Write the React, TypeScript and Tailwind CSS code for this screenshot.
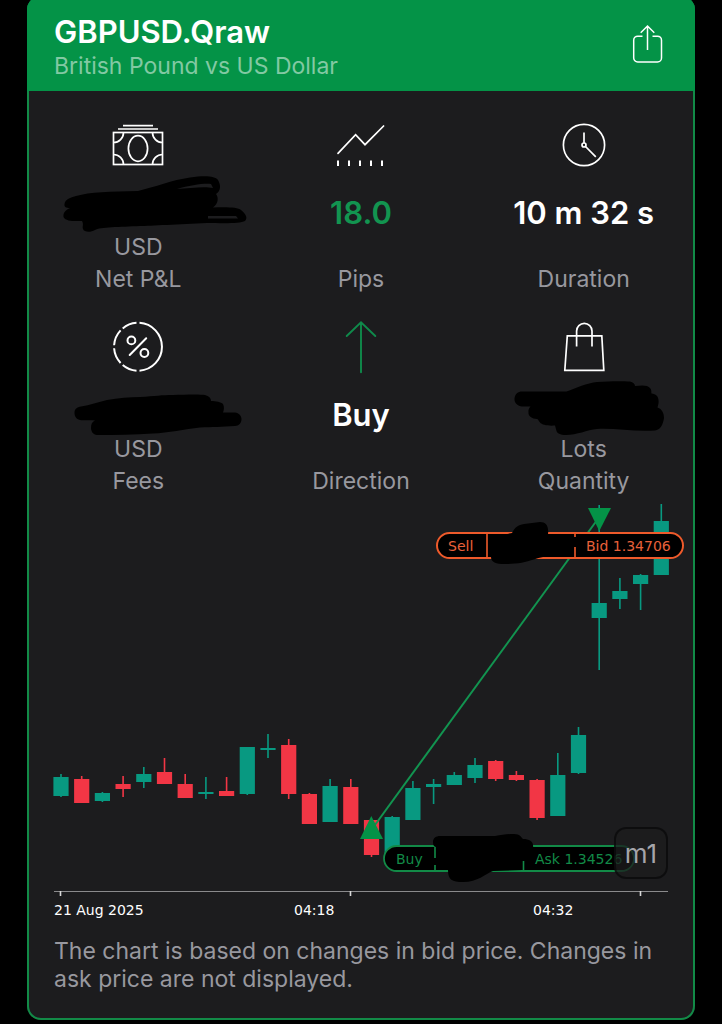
import type { ReactNode } from 'react';

type Candle = {
  high: number;
  low: number;
  top: number;
  bottom: number;
  up: boolean;
};

const candles: Candle[] = [
  { high: 774, low: 797, top: 777, bottom: 796, up: true },
  { high: 776, low: 803, top: 779, bottom: 803, up: false },
  { high: 792, low: 802, top: 793, bottom: 801, up: true },
  { high: 776, low: 797, top: 784, bottom: 789, up: false },
  { high: 767, low: 788, top: 774, bottom: 782, up: true },
  { high: 758, low: 783, top: 772, bottom: 784, up: false },
  { high: 774, low: 797, top: 784, bottom: 798, up: false },
  { high: 777, low: 799, top: 792, bottom: 794, up: true },
  { high: 777, low: 796, top: 791, bottom: 796, up: false },
  { high: 747, low: 795, top: 747, bottom: 794, up: true },
  { high: 734, low: 758, top: 748, bottom: 750, up: true },
  { high: 739, low: 799, top: 745, bottom: 794, up: false },
  { high: 793, low: 823, top: 794, bottom: 824, up: false },
  { high: 779, low: 821, top: 786, bottom: 822, up: true },
  { high: 779, low: 823, top: 787, bottom: 824, up: false },
  { high: 820, low: 857, top: 820, bottom: 855, up: false },
  { high: 816, low: 860, top: 817, bottom: 858, up: true },
  { high: 781, low: 820, top: 788, bottom: 820, up: true },
  { high: 779, low: 804, top: 784, bottom: 787, up: true },
  { high: 772, low: 785, top: 775, bottom: 785, up: true },
  { high: 758, low: 783, top: 765, bottom: 778, up: true },
  { high: 760, low: 781, top: 761, bottom: 779, up: false },
  { high: 771, low: 781, top: 775, bottom: 780, up: false },
  { high: 779, low: 820, top: 780, bottom: 818, up: false },
  { high: 753, low: 816, top: 775, bottom: 816, up: true },
  { high: 727, low: 774, top: 735, bottom: 773, up: true },
  { high: 505, low: 670, top: 603, bottom: 618, up: true },
  { high: 578, low: 609, top: 591, bottom: 599, up: true },
  { high: 574, low: 610, top: 575, bottom: 584, up: true },
  { high: 504, low: 575, top: 521, bottom: 575, up: true },
];

const timeLabels = [
  { x: 54, text: '21 Aug 2025' },
  { x: 294, text: '04:18' },
  { x: 533, text: '04:32' },
];

function Icon({ children, className = 'text-white' }: { children: ReactNode; className?: string }) {
  return (
    <svg
      viewBox="0 0 50 50"
      className={`size-[50px] overflow-visible ${className}`}
      fill="none"
      stroke="currentColor"
      strokeWidth="1.7"
      aria-hidden="true"
    >
      {children}
    </svg>
  );
}

function MoneyIcon() {
  return (
    <Icon>
      <path d="M10 5.7H40M5 9H45" />
      <rect x="0.5" y="12.5" width="49" height="32" />
      <ellipse cx="25" cy="28.5" rx="9.6" ry="12.8" />
      <path d="M10.5 12.5C10.5 18 6 22.5 0.5 22.5M39.5 12.5C39.5 18 44 22.5 49.5 22.5M0.5 34.5C6 34.5 10.5 39 10.5 44.5M49.5 34.5C44 34.5 39.5 39 39.5 44.5" />
    </Icon>
  );
}

function TrendIcon() {
  return (
    <Icon>
      <path d="M2 33.3L19.6 14.7L29 24.7L47.6 6" strokeLinecap="round" />
      <path d="M2 40.5V46M13 40.5V46M24 40.5V46M35 40.5V46M46 40.5V46" strokeWidth="2" />
    </Icon>
  );
}

function ClockIcon() {
  return (
    <Icon>
      <circle cx="25" cy="25" r="20.6" />
      <circle cx="25" cy="25" r="2" />
      <path d="M25 23V12.5M26.5 26.5L36.8 36.8" />
    </Icon>
  );
}

function PercentIcon() {
  return (
    <Icon>
      <g strokeWidth="2">
        <path d="M26.5 0.8A24 24 0 0 1 26.5 48.7" />
        <path d="M23.5 0.8A24 24 0 0 0 9.7 6.4M7.6 8.4A24 24 0 0 0 1.1 23.2M1.1 26.3A24 24 0 0 0 7.6 41M9.7 43A24 24 0 0 0 23.5 48.7" />
        <circle cx="18.4" cy="18.4" r="3.9" />
        <circle cx="31.4" cy="31" r="3.9" />
        <path d="M33.2 16.3L16.7 33" strokeLinecap="round" />
      </g>
    </Icon>
  );
}

function UpArrowIcon() {
  return (
    <Icon className="text-[#0f8a4b]">
      <path d="M25 50.3V0.4M10.7 14L25 0.4L39.3 14" strokeWidth="1.9" strokeLinecap="round" />
    </Icon>
  );
}

function BagIcon() {
  return (
    <Icon>
      <path d="M8.3 13.8H42.8L44.8 48.3H5.8Z" />
      <path d="M17.6 24.5V9A7.7 7.7 0 0 1 33 9V24.5" />
    </Icon>
  );
}

/** Hand-drawn mark over a private value. */
function Redaction({ viewBox, d }: { viewBox: string; d: string }) {
  return (
    <svg viewBox={viewBox} className="h-[76px] w-[222px] shrink-0" role="img" aria-label="Hidden value">
      <path d={d} fill="#000" fillRule="evenodd" />
    </svg>
  );
}

type StatProps = {
  icon: ReactNode;
  value: ReactNode;
  unit?: string;
  label: string;
  valueClass?: string;
};

function Stat({ icon, value, unit, label, valueClass = 'text-white' }: StatProps) {
  return (
    <div className="flex flex-col items-center text-[23px] leading-8 text-[#98989f]">
      {icon}
      <div className={`mt-[25px] flex h-9 items-center justify-center text-[31px] font-semibold ${valueClass}`}>
        {value}
      </div>
      <div className="h-8">{unit}</div>
      <div>{label}</div>
    </div>
  );
}

function Chart() {
  return (
    <svg
      viewBox="27 497 668 423"
      className="block w-full overflow-visible font-['DejaVu_Sans',Verdana,sans-serif] text-[14px]"
      role="img"
      aria-label="GBPUSD one minute candles"
    >
      {candles.map((c, i) => {
        const x = 61 + i * 20.7;
        return (
          <g key={i} fill={c.up ? '#089981' : '#f23645'}>
            <rect x={x - 0.8} y={c.high} width="1.6" height={c.low - c.high} />
            <rect x={x - 7.6} y={c.top} width="15.2" height={c.bottom - c.top} />
          </g>
        );
      })}

      {/* Trade entry and exit */}
      <path d="M371.3 830L599.3 517" stroke="#129450" strokeWidth="2" />
      <path d="M371.3 816L383 839H360Z" fill="#049347" />
      <path d="M588 508H611L599.3 531Z" fill="#049347" />

      {/* Sell tag */}
      <rect x="437" y="533" width="246" height="25" rx="12.5" fill="#000" stroke="#ee5a2b" strokeWidth="2" />
      <path d="M487 533V558M575 533V537M575 547V558" stroke="#ee5a2b" strokeWidth="1.6" />
      <path d="M491 537L512 533C515 527 518 525 524 524L540 522C546 522 549 526 548 534L574 535V556L543 557C530 560 525 563 515 563.5C500 565 491 564 491 557Z" />
      <text x="448" y="551" fill="#e8603a">Sell</text>
      <text x="586" y="551" fill="#e8603a">Bid 1.34706</text>

      {/* Buy tag */}
      <rect x="384" y="846" width="250" height="25" rx="12.5" fill="#000" stroke="#128a47" strokeWidth="1.8" />
      <path d="M435 846V858M435 865V871M523.5 861V871" stroke="#128a47" strokeWidth="1.6" />
      <path d="M433 842C433 838 436 836 440 836H495C502 835 507 834 514 834C520 834 521 837 523 839C530 839 534 842 533 848L522 861V870L493 871C485 874 478 882 463 882C452 882 448 880 448 870L437 866V847C434 847 433 845 433 842Z" />
      <text x="396" y="864" fill="#128a47">Buy</text>
      <text x="535" y="864" fill="#128a47">Ask 1.34526</text>

      {/* Time axis */}
      <path d="M54 891.5H668" stroke="#8a8a8c" strokeWidth="1" />
      <path d="M60.5 891V896M350.5 891V896M640.5 891V896" stroke="#d8d8d8" strokeWidth="1.6" />
      {timeLabels.map((label) => (
        <text key={label.text} x={label.x} y="915" fill="#fff">
          {label.text}
        </text>
      ))}
    </svg>
  );
}

const netPath =
  'M64.5 204C65 199 72 197 76 196C90 192 110 191.5 138 191C155 187 172 180 190 177.5C205 175.5 215 176 218 180C221 185 221 191 216 194C219 198 218 204 213 207.5C225 207 238 207 241 210C246 214 248 218 245 221C240 224 220 223 207 223C180 224 150 226 140 226C120 227 100 227 95 230C90 233 84 232 83 229C82 226 84 225 82 221C76 221 66 222 63.5 217C63 212 66 210 70 208C66 208 64 207 64.5 204ZM177 189C190 185 205 183 211 184L213 188C205 186 190 188 177 189ZM208 216H236L238 218.5H208Z';

const feesPath =
  'M74.5 413C74.5 409 77 407 81 406.5C90 405 98 402 107 400C118 398 130 397 140 397C155 396 162 395 173 395C185 394.5 200 394 205 395C209 396 211 398 211 401C216 401 221 402 223 404C224.5 407 224 410 223 412.5H235C239 413 241.5 416 241.5 419C241.5 423 239 426 235 426C222 427 212 427 200 427.5C185 429 168 433 153 433.5C135 435 115 435 97 435C93 435 91 431 91 428C91 424 92 422 95 420.5C88 420 83 420.5 80 420C76 419 74.5 416 74.5 413Z';

const lotsPath =
  'M514.5 397.5C515 393 518 390.5 522 390.5H566.5C576 387 587 382 597 381C610 380 622 380 630 380.5C633 381 635 383 635 385C642 384 648 384 650 387C652 389 651 391 651.5 392.5C656 393 658 395 658.5 399C659 402 658 404 657.5 406.5C662 408 664 412 664 417C663 424 660 429 655 429.5C635 431 615 427 597 428C587 429 577 434 566 434C560 434 557 432 556.5 430L555 424.5C548 425 542 424 540 421.5C538 419 538 418 537 418C532 418 528 415 528.5 411.5C528 409 529 407 530.5 405.5H522C518 405 514 402 514.5 397.5Z';

export default function App() {
  return (
    <div className="flow-root min-h-screen overflow-hidden bg-black font-[Inter,'Liberation_Sans',sans-serif]">
      <main className="mx-[27px] -mt-1 overflow-hidden rounded-[14px] bg-[#1c1c1e] pb-[27px] ring-2 ring-[#128a47] ring-inset">
        <header className="flex items-center justify-between bg-[#049347] pt-[18px] pr-[31px] pb-[9px] pl-[27px]">
          <div>
            <h1 className="text-[31px] leading-9 font-semibold text-white">GBPUSD.Qraw</h1>
            <p className="text-[23px] leading-8 text-[#82c9a3]">British Pound vs US Dollar</p>
          </div>
          <button type="button" aria-label="Share" className="text-white">
            <svg viewBox="0 0 32 48" className="h-12 w-8" fill="none" stroke="currentColor" strokeWidth="1.5">
              <path d="M10.5 12.2H5.7A4 4 0 0 0 1.7 16.2V34A4 4 0 0 0 5.7 38H25.5A4 4 0 0 0 29.5 34V16.2A4 4 0 0 0 25.5 12.2H20.5" />
              <path d="M15.5 26V2M8.7 8.7L15.5 2L22.3 8.7" />
            </svg>
          </button>
        </header>

        <section className="grid grid-cols-3 gap-y-[27px] pt-[29px]">
          <Stat icon={<MoneyIcon />} value={<Redaction viewBox="27 175 222 76" d={netPath} />} unit="USD" label="Net P&L" />
          <Stat icon={<TrendIcon />} value="18.0" valueClass="text-[#129450]" label="Pips" />
          <Stat icon={<ClockIcon />} value="10 m 32 s" label="Duration" />
          <Stat icon={<PercentIcon />} value={<Redaction viewBox="27 377 222 76" d={feesPath} />} unit="USD" label="Fees" />
          <Stat icon={<UpArrowIcon />} value="Buy" label="Direction" />
          <Stat icon={<BagIcon />} value={<Redaction viewBox="473 376 222 76" d={lotsPath} />} unit="Lots" label="Quantity" />
        </section>

        <div className="relative">
          <Chart />
          <button
            type="button"
            className="absolute right-[27px] bottom-[41px] h-[52px] w-[54px] rounded-xl border-2 border-black/50 bg-[#1c1c1e]/75 text-[26px] text-[#a5a5aa]"
          >
            m1
          </button>
        </div>

        <p className="px-[27px] pt-[17px] text-[23px] leading-7 text-[#98989f]">
          The chart is based on changes in bid price. Changes in ask price are not displayed.
        </p>
      </main>
    </div>
  );
}
